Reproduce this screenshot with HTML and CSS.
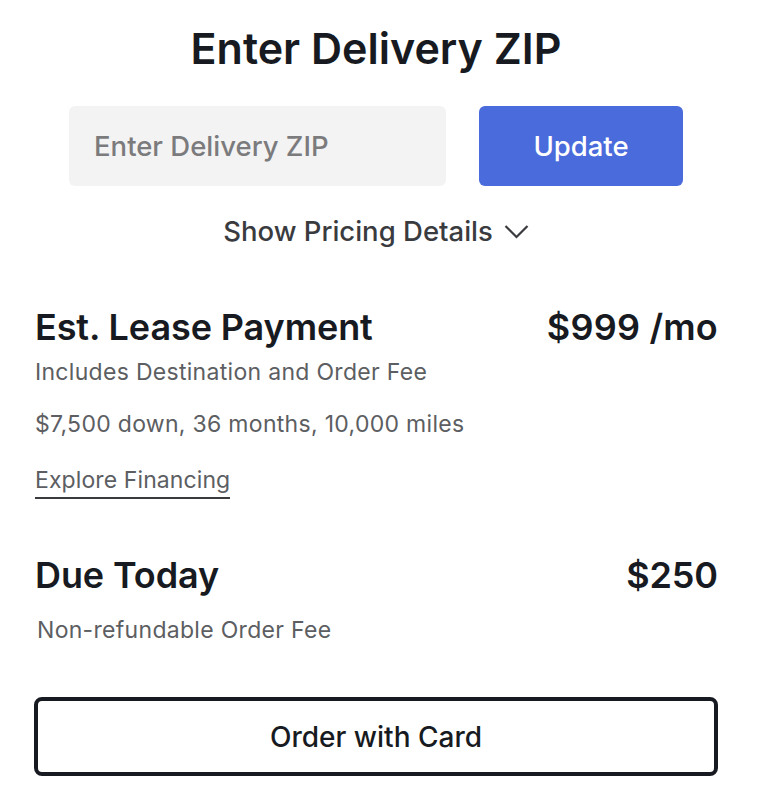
FILE: index.html
```html
<!DOCTYPE html>
<html>
<head>
<meta charset="utf-8">
<link rel="stylesheet" href="styles.css">
</head>
<body>
<main class="panel">
  <h1 class="title">Enter Delivery ZIP</h1>
  <div class="zip-row">
    <input class="zip-input" type="text" placeholder="Enter Delivery ZIP">
    <button class="update-btn">Update</button>
  </div>
  <button class="details-toggle">Show Pricing Details
    <svg class="chev" width="25" height="15" viewBox="0 0 25 15"><path d="M1.5 2 L12.5 13 L23.5 2" fill="none" stroke="#3a3b3f" stroke-width="2.2"/></svg>
  </button>

  <section class="price-block">
    <div class="price-row">
      <span class="price-label">Est. Lease Payment</span>
      <span class="price-value wide">$999 /mo</span>
    </div>
    <p class="note note-incl">Includes Destination and Order Fee</p>
    <p class="note note-terms">$7,500 down, 36 months, 10,000 miles</p>
    <a class="explore">Explore Financing</a>
  </section>

  <section class="price-block due">
    <div class="price-row">
      <span class="price-label">Due Today</span>
      <span class="price-value">$250</span>
    </div>
    <p class="note note-fee">Non-refundable Order Fee</p>
  </section>

  <button class="order-btn">Order with Card</button>
</main>
</body>
</html>
```

FILE: styles.css
```css
* { box-sizing: border-box; }
html, body { margin: 0; background: #fff; }
body {
  font-family: Inter, "Noto Sans", sans-serif;
  color: #171a20;
}
.panel {
  width: 684px;
  margin-left: 34px;
  display: flex;
  flex-direction: column;
}
.title {
  margin: 20px 0 0;
  font-size: 43px;
  font-weight: 600;
  line-height: 56px;
  text-align: center;
  letter-spacing: 0;
}
.zip-row {
  display: flex;
  justify-content: center;
  gap: 33px;
  margin-top: 30px;
}
.zip-input {
  width: 377px;
  height: 80px;
  border: none;
  border-radius: 6px;
  background: #f3f3f3;
  padding: 0 25px;
  font-family: inherit;
  font-size: 27.5px;
  font-weight: 500;
  color: #171a20;
  outline: none;
}
.zip-input::placeholder { color: #7b7b7d; }
.update-btn {
  width: 204px;
  height: 80px;
  border: none;
  border-radius: 6px;
  background: #4a6bdb;
  color: #fff;
  font-family: inherit;
  font-size: 27.5px;
  font-weight: 500;
}
.details-toggle {
  align-self: center;
  margin-top: 28px;
  border: none;
  background: none;
  padding: 0;
  display: flex;
  align-items: center;
  gap: 11px;
  font-family: inherit;
  font-size: 27.5px;
  font-weight: 500;
  color: #3a3b3f;
  line-height: 34px;
}
.chev { display: block; margin-top: 1px; }
.price-block {
  display: flex;
  flex-direction: column;
  align-items: flex-start;
  margin-top: 56px;
  padding-left: 1px;
}
.price-block.due { margin-top: 53px; }
.price-row {
  align-self: stretch;
  display: flex;
  justify-content: space-between;
  align-items: baseline;
  font-size: 36px;
  font-weight: 600;
  line-height: 46px;
  letter-spacing: -0.1px;
}
.price-value.wide { letter-spacing: 0.2px; }
.note {
  margin: 0;
  font-size: 23px;
  line-height: 30px;
  letter-spacing: 0.3px;
  color: #5c5e62;
}
.note-incl { margin-top: 7px; }
.note-terms { margin-top: 22px; }
.note-fee { margin-top: 17px; margin-left: 2px; }
.explore {
  display: inline-block;
  margin-top: 26px;
  font-size: 23px;
  line-height: 30px;
  letter-spacing: 0.1px;
  color: #5c5e62;
  padding-bottom: 2px;
  border-bottom: 2px solid #3a3b3f;
}
.order-btn {
  margin-top: 52px;
  height: 79px;
  border: 4px solid #171a20;
  border-radius: 8px;
  background: #fff;
  font-family: inherit;
  font-size: 28px;
  font-weight: 500;
  color: #171a20;
}
```
